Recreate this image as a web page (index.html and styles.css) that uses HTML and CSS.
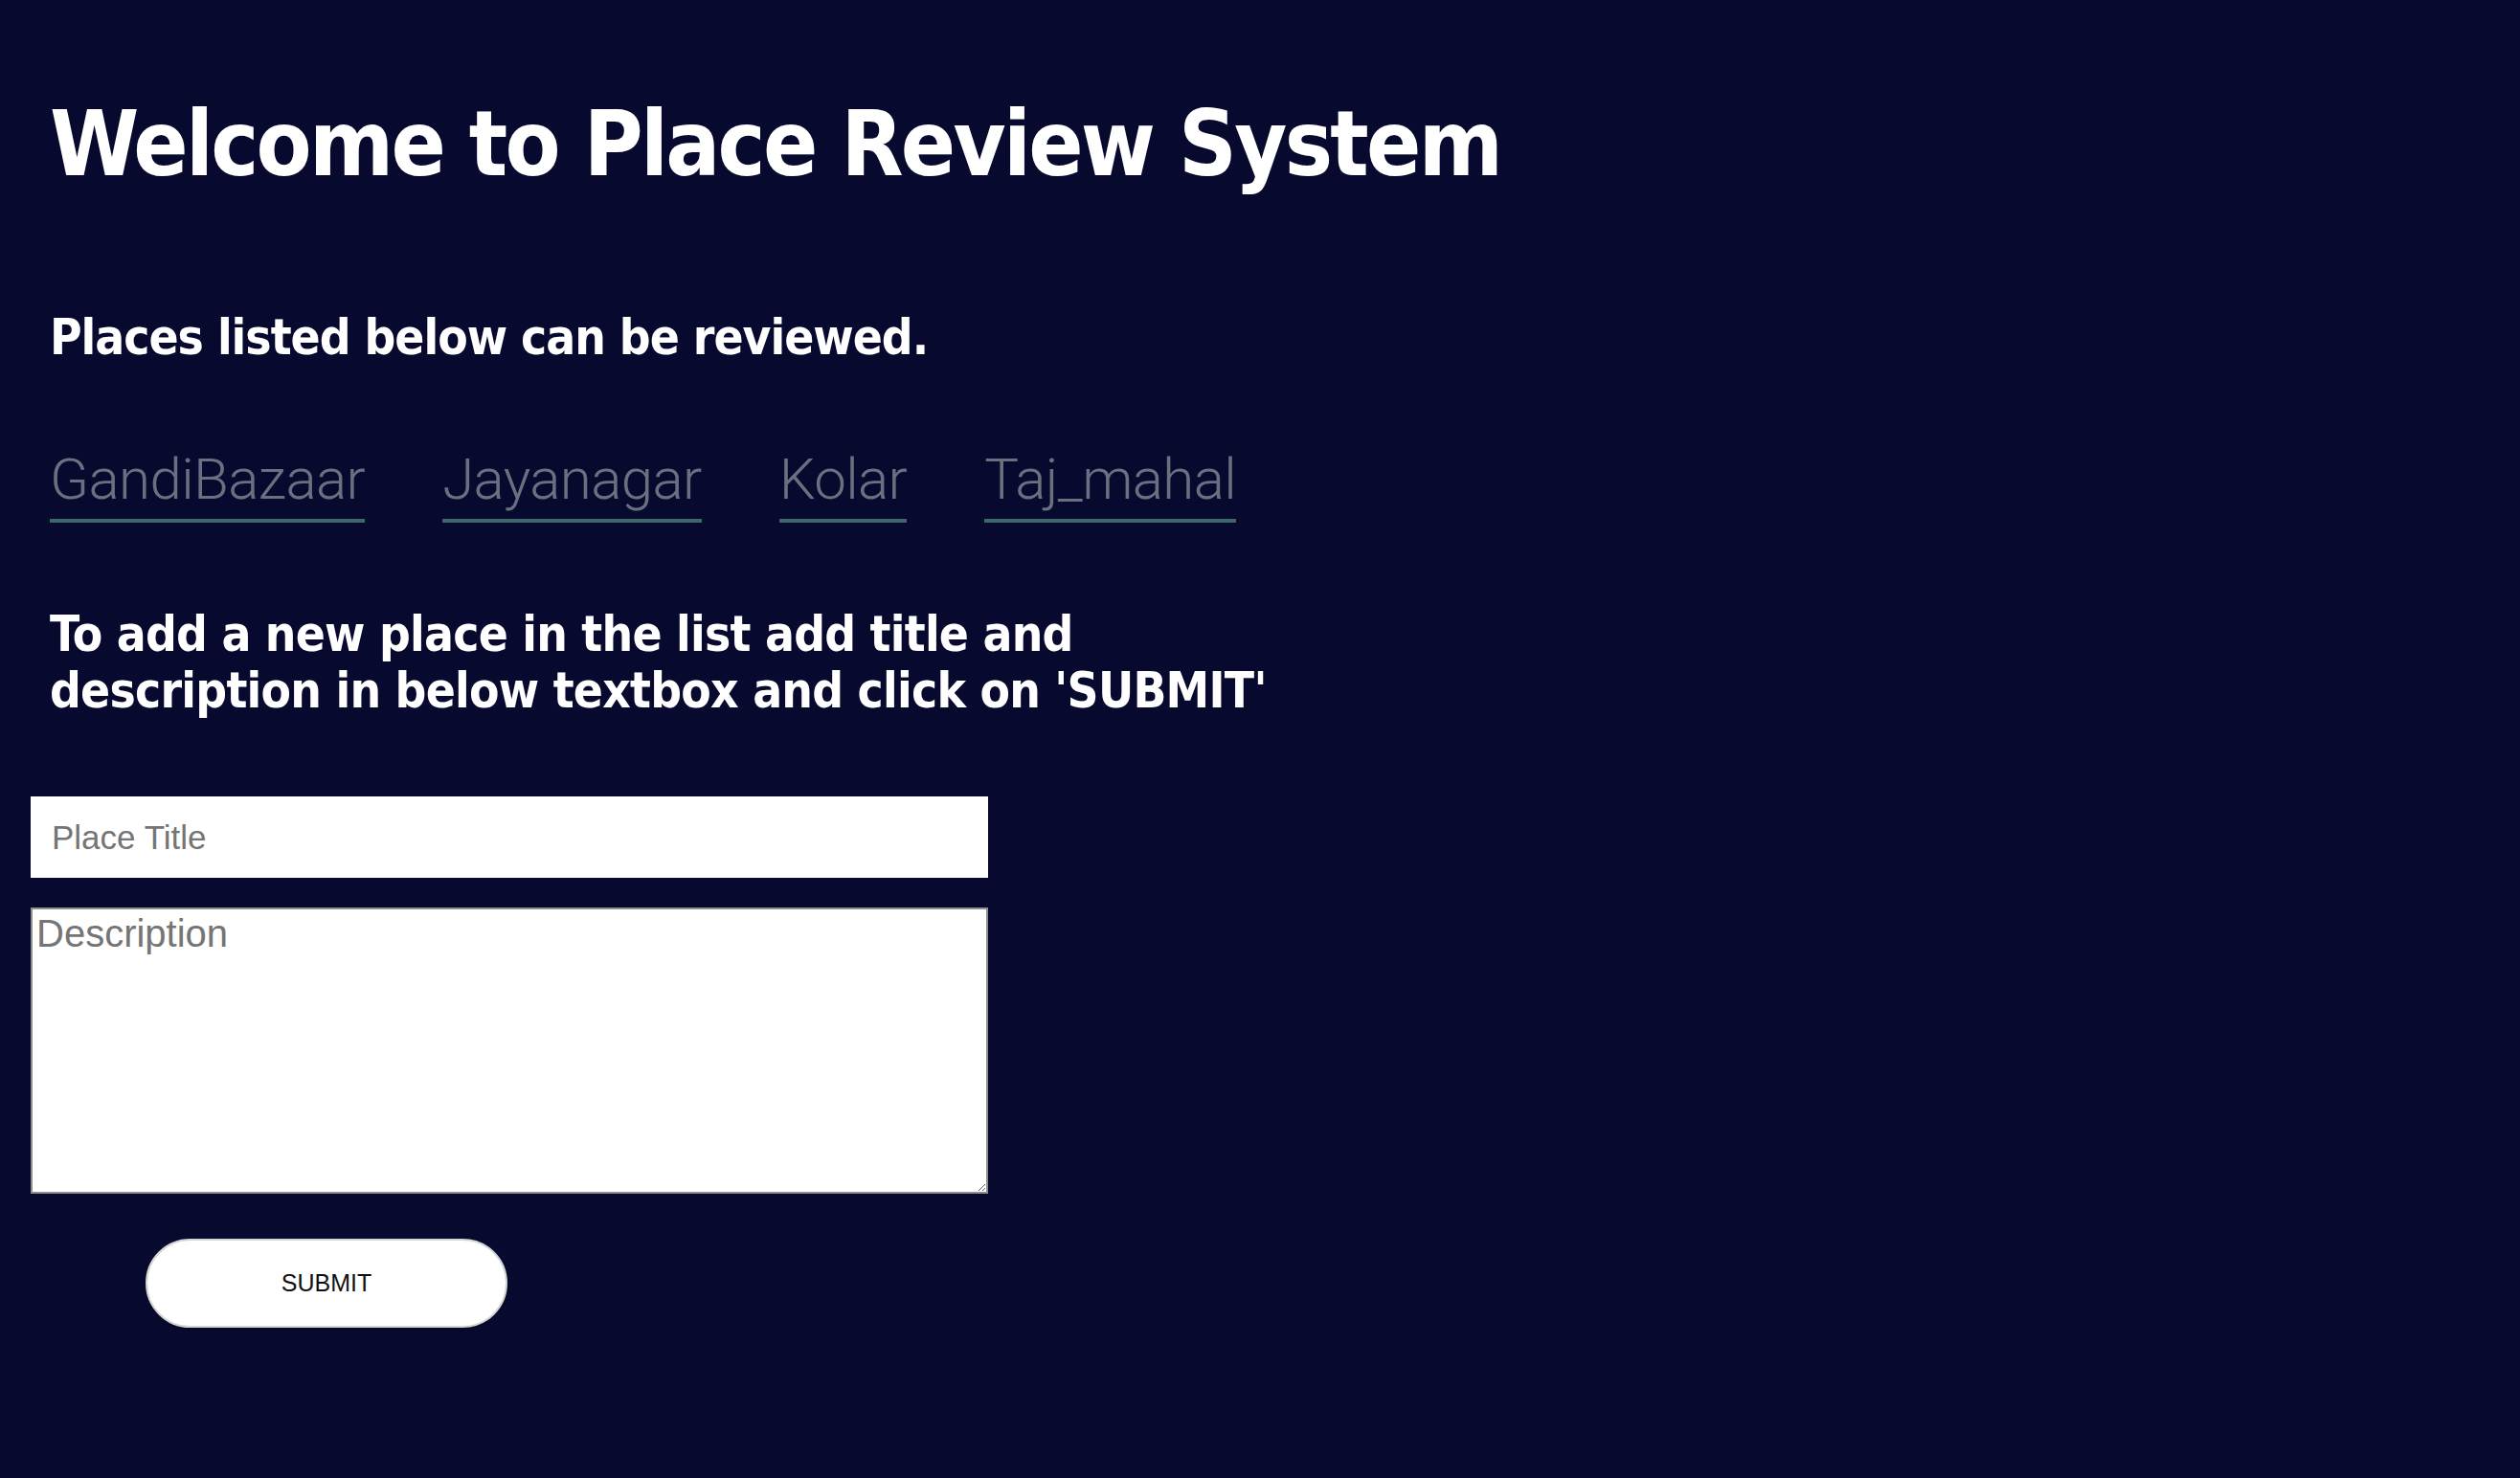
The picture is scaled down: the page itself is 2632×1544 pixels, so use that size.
FILE: index.html
```html
<!DOCTYPE html>
<html lang="en">
<head>
<meta charset="utf-8">
<title>Place Review System</title>
<link rel="stylesheet" href="styles.css">
</head>
<body>
<main class="page">
  <h1 class="title">Welcome to Place Review System</h1>
  <h2 class="subtitle">Places listed below can be reviewed.</h2>
  <nav class="places">
    <a class="place" href="#">GandiBazaar</a>
    <a class="place" href="#">Jayanagar</a>
    <a class="place" href="#">Kolar</a>
    <a class="place" href="#">Taj_mahal</a>
  </nav>
  <p class="hint">To add a new place in the list add title and<br>description in below textbox and click on 'SUBMIT'</p>
  <form class="form">
    <input class="field" type="text" placeholder="Place Title">
    <textarea class="area" placeholder="Description"></textarea>
    <button class="submit" type="button">SUBMIT</button>
  </form>
</main>
</body>
</html>
```

FILE: styles.css
```css
html, body {
  margin: 0;
  padding: 0;
  background: #070a2e;
}
body {
  min-height: 1544px;
}
.page {
  padding: 104px 32px 0 32px;
  color: #ffffff;
  font-family: "DejaVu Sans Condensed", "DejaVu Sans", sans-serif;
}
.title {
  margin: 0;
  padding-left: 20px;
  font-size: 94px;
  line-height: 94px;
  font-weight: bold;
  letter-spacing: -2.7px;
}
.subtitle {
  margin: 129px 0 0 0;
  padding-left: 20px;
  font-size: 51px;
  line-height: 51px;
  font-weight: bold;
  letter-spacing: -1px;
}
.places {
  display: flex;
  align-items: flex-start;
  gap: 81px;
  margin-top: 93px;
  padding-left: 20px;
}
.place {
  display: block;
  font-family: Roboto, "Liberation Sans", sans-serif;
  font-weight: 300;
  font-size: 60px;
  line-height: 60px;
  letter-spacing: -0.6px;
  color: #6b7080;
  text-decoration: none;
  padding-bottom: 11px;
  border-bottom: 4px solid #3c6868;
}
.hint {
  margin: 87px 0 0 0;
  padding-left: 20px;
  font-size: 51px;
  line-height: 59px;
  font-weight: bold;
  letter-spacing: -0.75px;
}
.form {
  display: flex;
  flex-direction: column;
  align-items: flex-start;
  margin-top: 81px;
}
.field {
  box-sizing: border-box;
  width: 1000px;
  height: 85px;
  margin: 0;
  padding: 0 22px;
  border: none;
  background: #ffffff;
  font-family: "Liberation Sans", Arial, sans-serif;
  font-size: 35px;
  color: #222;
  outline: none;
}
.field::placeholder {
  color: #757575;
}
.area {
  box-sizing: border-box;
  width: 1000px;
  height: 299px;
  margin: 31px 0 0 0;
  padding: 2px 4px;
  border: 2px solid #8f8f8f;
  background: #ffffff;
  font-family: "Liberation Sans", Arial, sans-serif;
  font-size: 40px;
  line-height: 46px;
  color: #222;
  resize: both;
}
.area::placeholder {
  color: #757575;
}
.submit {
  box-sizing: border-box;
  width: 378px;
  height: 93px;
  margin: 47px 0 0 120px;
  border: 2px solid #d4d4d4;
  border-radius: 47px;
  background: #ffffff;
  box-shadow: 0 2px 2px rgba(0, 0, 0, 0.25);
  font-family: "Liberation Sans", Arial, sans-serif;
  font-size: 25px;
  color: #111;
  cursor: pointer;
}
```
